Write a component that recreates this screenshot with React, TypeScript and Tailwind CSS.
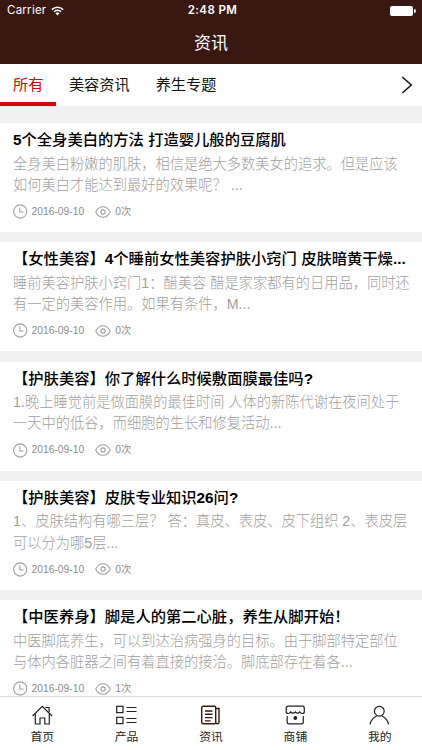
import { useState } from "react";

const tabs = ["所有", "美容资讯", "养生专题"];

const articles = [
  {
    title: "5个全身美白的方法 打造婴儿般的豆腐肌",
    lines: [
      "全身美白粉嫩的肌肤，相信是绝大多数美女的追求。但是应该",
      "如何美白才能达到最好的效果呢？ ...",
    ],
    date: "2016-09-10",
    views: 0,
  },
  {
    title: "【女性美容】4个睡前女性美容护肤小窍门 皮肤暗黄干燥...",
    lines: [
      "睡前美容护肤小窍门1：醋美容 醋是家家都有的日用品，同时还",
      "有一定的美容作用。如果有条件，M...",
    ],
    date: "2016-09-10",
    views: 0,
  },
  {
    title: "【护肤美容】你了解什么时候敷面膜最佳吗?",
    lines: [
      "1.晚上睡觉前是做面膜的最佳时间 人体的新陈代谢在夜间处于",
      "一天中的低谷，而细胞的生长和修复活动...",
    ],
    date: "2016-09-10",
    views: 0,
  },
  {
    title: "【护肤美容】皮肤专业知识26问?",
    lines: [
      "1、皮肤结构有哪三层？ 答：真皮、表皮、皮下组织 2、表皮层",
      "可以分为哪5层...",
    ],
    date: "2016-09-10",
    views: 0,
  },
  {
    title: "【中医养身】脚是人的第二心脏，养生从脚开始！",
    lines: [
      "中医脚底养生，可以到达治病强身的目标。由于脚部特定部位",
      "与体内各脏器之间有着直接的接洽。脚底部存在着各...",
    ],
    date: "2016-09-10",
    views: 1,
  },
];

function WifiIcon() {
  return (
    <svg width="13" height="10" viewBox="0 0 13 10" fill="none" stroke="white">
      <path d="M0.9 3.6a8 8 0 0 1 11.2 0" strokeWidth="1.6" />
      <path d="M3 5.8a5 5 0 0 1 7 0" strokeWidth="1.5" />
      <path d="M6.5 9.4 4.5 7.3a2.9 2.9 0 0 1 4 0z" fill="white" stroke="none" />
    </svg>
  );
}

function ClockIcon() {
  return (
    <svg width="15" height="15" viewBox="0 0 15 15" fill="none" stroke="#a0a0a0" strokeWidth="1.1">
      <circle cx="7.2" cy="7.5" r="6.6" />
      <path d="M6.8 3.6v4.4h3.7" />
    </svg>
  );
}

function EyeIcon() {
  return (
    <svg width="16" height="12" viewBox="0 0 16 12" fill="none" stroke="#a0a0a0" strokeWidth="1.1">
      <path d="M0.7 6C2.5 2.5 5 0.7 8 0.7S13.5 2.5 15.3 6C13.5 9.5 11 11.3 8 11.3S2.5 9.5 0.7 6z" />
      <circle cx="8" cy="6" r="2.1" />
    </svg>
  );
}

// The Latin face has no medium weight, so digits and dots get bold
function Title({ text }: { text: string }) {
  return (
    <h2 className="h-[24.5px] text-[15.3px] leading-[21px] font-medium text-black">
      {text.split(/([\d.?]+)/).map((part, i) =>
        i % 2 ? (
          <span key={i} className="font-bold">
            {part}
          </span>
        ) : (
          part
        )
      )}
    </h2>
  );
}

const navItems = [
  {
    label: "首页",
    icon: (
      <>
        <path d="M0.6 11 10.3 1.3 20 11" />
        <path d="M3.3 9v10H8v-6h4.8v6h4.5V9" />
        <path d="M13.3 2.5h3.8v4.8" />
      </>
    ),
  },
  {
    label: "产品",
    icon: (
      <>
        <rect x="0.7" y="1.3" width="6.3" height="6.3" />
        <rect x="0.7" y="12.3" width="6.3" height="6.3" />
        <path d="M10.5 2.5h10M10.5 6.5h10M10.5 13.5h10M10.5 17.5h10" />
      </>
    ),
  },
  {
    label: "资讯",
    icon: (
      <>
        <path
          d="M15.5 18.7H3.2a1.5 1.5 0 0 1-1.5-1.5V2.7a1.5 1.5 0 0 1 1.5-1.5h11.5a1 1 0 0 1 1 1v15.5l1.3 1c1.2 0 2-.6 2-1.8V3.5h-3"
          strokeWidth="1.4"
        />
        <path d="M5 6h7.5M5 9.3h7.5M5 12.6h7.5M5 15.9h5.5" strokeWidth="1.4" />
      </>
    ),
  },
  {
    label: "商铺",
    icon: (
      <>
        <path d="M3 1.2h14.5a1.8 1.8 0 0 1 1.8 1.8v4.5c-1.3 1.5-3.2 1.3-4.5-.6-1.3 1.7-3.3 1.7-4.5 0-1.3 1.7-3.3 1.7-4.5 0-1.3 1.9-3.2 2.1-4.6.6V3A1.8 1.8 0 0 1 3 1.2z" />
        <path d="M2.2 11v5.9a1.9 1.9 0 0 0 1.9 1.9h12.3a1.9 1.9 0 0 0 1.9-1.9V11" />
        <circle cx="10.3" cy="13" r="1.3" fill="currentColor" />
      </>
    ),
  },
  {
    label: "我的",
    icon: (
      <>
        <circle cx="10.3" cy="6.2" r="4.9" />
        <path d="M1.1 19.3c.6-4.2 3.5-6.7 6.5-8.3M13 11c3 1.6 5.9 4.1 6.5 8.3" />
      </>
    ),
  },
];

export default function App() {
  const [activeTab, setActiveTab] = useState("所有");
  const [activeNav, setActiveNav] = useState("资讯");

  return (
    <main className="flex h-[750px] w-[422px] flex-col overflow-hidden bg-[#f0f0f0] font-['Liberation_Sans','Noto_Sans_CJK_SC',sans-serif]">
      <header className="h-16 shrink-0 bg-[#391812] text-white">
        <div className="grid h-[22px] grid-cols-3 items-center pr-[6px] pl-[7px] font-['Inter',sans-serif]">
          <div className="flex items-center gap-[5px] text-[11.5px] tracking-[0.25px]">
            <span>Carrier</span>
            <WifiIcon />
          </div>
          <div className="pl-[2px] text-center text-[11.5px] font-semibold tracking-[0.4px]">2:48 PM</div>
          <div className="flex items-center justify-end gap-px">
            <div className="h-[10px] w-[23px] rounded-[2px] bg-white" />
            <div className="h-[4px] w-[1.5px] rounded-r bg-white" />
          </div>
        </div>
        <h1 className="flex h-[42px] items-center justify-center pt-px text-[17px] leading-none">资讯</h1>
      </header>

      <nav className="flex h-[42px] shrink-0 items-stretch bg-white pr-[9px]">
        {tabs.map((tab) => (
          <button
            key={tab}
            onClick={() => setActiveTab(tab)}
            className={
              tab === activeTab
                ? "border-b-4 border-[#d80000] px-[13px] pt-[4px] text-[15.2px] text-[#d80000]"
                : "border-b-4 border-transparent pt-[4px] pr-[13.5px] pl-[12.5px] text-[15.2px] text-[#111]"
            }
          >
            {tab}
          </button>
        ))}
        <button className="ml-auto flex items-center">
          <svg width="12" height="18" viewBox="0 0 12 18" fill="none" stroke="#111" strokeWidth="1.5">
            <path d="M1.3 1 10.3 9 1.3 17" />
          </svg>
        </button>
      </nav>

      <section className="flex min-h-0 flex-1 flex-col gap-[10.3px] overflow-hidden pt-[17px]">
        {articles.map((a) => (
          <article key={a.title} className="h-[109px] shrink-0 bg-white px-[13px] pt-[6px] whitespace-nowrap">
            <Title text={a.title} />
            {a.lines.map((line) => (
              <p key={line} className="text-[14.25px] leading-[21.3px] font-light text-[#a0a0a0]">
                {line}
              </p>
            ))}
            <div className="mt-[7.5px] flex h-4 items-center text-[10.3px] text-[#8c8c8c]">
              <ClockIcon />
              <span className="ml-[3.5px]">{a.date}</span>
              <span className="ml-[11px]">
                <EyeIcon />
              </span>
              <span className="ml-[4px]">{a.views}次</span>
            </div>
          </article>
        ))}
      </section>

      <footer className="grid h-[54px] shrink-0 grid-cols-5 border-t border-[#dedede] bg-white">
        {navItems.map((item) => (
          <button
            key={item.label}
            onClick={() => setActiveNav(item.label)}
            className={
              item.label === activeNav
                ? "flex flex-col items-center pt-[8px] text-[#391812]"
                : "flex flex-col items-center pt-[8px] text-[#222]"
            }
          >
            <svg width="21" height="20" viewBox="0 0 21 20" fill="none" stroke="currentColor" strokeWidth="1.2">
              {item.icon}
            </svg>
            <span className="mt-[4px] text-[11.8px] leading-[16px]">{item.label}</span>
          </button>
        ))}
      </footer>
    </main>
  );
}
